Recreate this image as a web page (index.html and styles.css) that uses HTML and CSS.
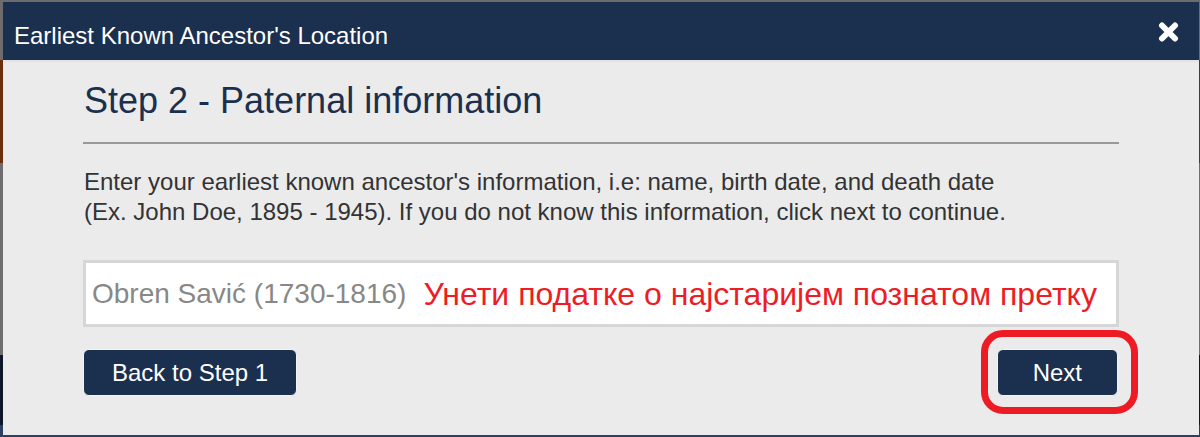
FILE: index.html
```html
<!DOCTYPE html>
<html lang="en">
<head>
<meta charset="utf-8">
<title>Earliest Known Ancestor's Location</title>
<link rel="stylesheet" href="styles.css">
</head>
<body>
<div class="modal">
  <div class="modal-header">
    <span class="modal-title">Earliest Known Ancestor's Location</span>
    <button class="close" aria-label="Close">
      <svg width="21" height="22" viewBox="0 0 21 22" aria-hidden="true">
        <path d="M4 4.5 L17 17.5 M17 4.5 L4 17.5" stroke="#fff" stroke-width="6" stroke-linecap="round" fill="none"/>
      </svg>
    </button>
  </div>
  <div class="modal-body">
    <h2 class="step-title">Step 2 - Paternal information</h2>
    <p class="intro">Enter your earliest known ancestor's information, i.e: name, birth date, and death date<br>(Ex. John Doe, 1895 - 1945). If you do not know this information, click next to continue.</p>
    <div class="field">
      <span class="field-value">Obren Savić (1730-1816)</span>
      <span class="field-note">Унети податке о најстаријем познатом претку</span>
    </div>
    <div class="actions">
      <button class="btn btn-back">Back to Step 1</button>
      <button class="btn btn-next">Next</button>
    </div>
    <div class="highlight"></div>
  </div>
</div>
</body>
</html>
```
FILE: styles.css
```css
html, body {
  margin: 0;
  padding: 0;
}
body {
  width: 1200px;
  height: 437px;
  overflow: hidden;
  font-family: "Liberation Sans", Arial, sans-serif;
  background:
    linear-gradient(to bottom,
      #6c6c6c 0px, #6c6c6c 60px,
      #6b2f0c 60px, #6b2f0c 163px,
      #6e6e6e 163px, #6e6e6e 355px,
      #0d1828 355px, #0d1828 425px,
      #2b4062 425px, #2b4062 437px);
}
.modal {
  position: relative;
  margin: 2px 1px 0 3px;
  width: 1196px;
  height: 433px;
  background: #ebebeb;
  box-sizing: border-box;
}
.modal-header {
  height: 58px;
  background: #1b2f4e;
  border-bottom: 2px solid #e3e3e3;
  box-sizing: content-box;
  display: flex;
  justify-content: space-between;
  align-items: flex-start;
  padding: 0 20px 0 11px;
}
.modal-title {
  color: #fff;
  font-size: 24px;
  line-height: 28px;
  padding-top: 20px;
}
.close {
  margin-top: 19px;
  padding: 0;
  border: 0;
  background: none;
  width: 21px;
  height: 22px;
  display: flex;
}
.modal-body {
  padding: 0 80px 0 80px;
}
.step-title {
  margin: 19px 0 0 0;
  padding: 0 0 21px 1px;
  border-bottom: 2px solid #999;
  font-size: 36px;
  line-height: 40px;
  font-weight: normal;
  color: #1b2f4e;
}
.intro {
  margin: 23px 0 0 1px;
  font-size: 24px;
  line-height: 30px;
  color: #333;
}
.field {
  margin-top: 33px;
  height: 67px;
  box-sizing: border-box;
  border: 3px solid #d6d6d6;
  background: #fff;
  display: flex;
  align-items: center;
  gap: 17px;
  padding-left: 6px;
  font-size: 28px;
}
.field-value {
  color: #888;
}
.field-note {
  color: #ee1c25;
  font-size: 32px;
  margin-top: 2px;
}
.actions {
  margin-top: 22px;
  display: flex;
  justify-content: space-between;
  padding-right: 1px;
}
.btn {
  height: 47px;
  box-sizing: border-box;
  background: #1b2f4e;
  color: #fff;
  border: 1px solid #f4f4f4;
  border-radius: 6px;
  font-family: "Liberation Sans", Arial, sans-serif;
  font-size: 24px;
  line-height: 28px;
  padding: 0 28px;
}
.btn-next {
  padding: 0 35px;
}
.highlight {
  position: absolute;
  left: 978px;
  top: 328px;
  width: 157px;
  height: 84px;
  box-sizing: border-box;
  border: 7px solid #ed1c24;
  border-radius: 22px;
  pointer-events: none;
}
```
